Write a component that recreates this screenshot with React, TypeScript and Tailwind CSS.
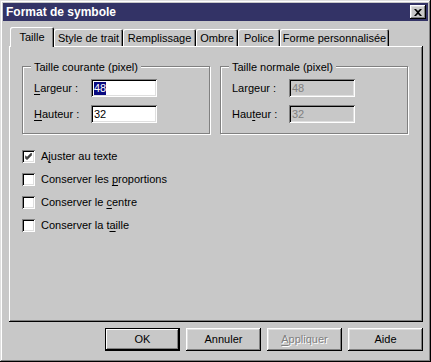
import React from "react";

const raised =
  "shadow-[inset_-1px_-1px_0_#000,inset_1px_1px_0_#fff,inset_-2px_-2px_0_#808080,inset_2px_2px_0_#dfdfdf]";
const sunken =
  "shadow-[inset_1px_1px_0_#808080,inset_-1px_-1px_0_#fff,inset_2px_2px_0_#000,inset_-2px_-2px_0_#dfdfdf]";

function U({ children }: { children: React.ReactNode }) {
  return <span className="underline underline-offset-[2px]">{children}</span>;
}

function Tab({ label, w, active }: { label: string; w: string; active?: boolean }) {
  if (active) {
    return (
      <div
        className={`${w} h-[20px] -mb-[1px] relative z-10 bg-[#c8c8c8] rounded-t-[2px] flex items-center justify-center pt-[1px] whitespace-nowrap shadow-[inset_1px_1px_0_#fff,inset_-1px_0_0_#000,inset_-2px_0_0_#808080]`}
      >
        {label}
      </div>
    );
  }
  return (
    <div
      className={`${w} h-[17px] rounded-t-[2px] flex items-center justify-center pt-[1px] whitespace-nowrap shadow-[inset_1px_1px_0_#fff,inset_-1px_0_0_#000,inset_-2px_0_0_#808080]`}
    >
      {label}
    </div>
  );
}

function Field({
  label,
  value,
  disabled,
  selected,
}: {
  label: React.ReactNode;
  value: string;
  disabled?: boolean;
  selected?: boolean;
}) {
  return (
    <div className="flex items-center h-[18px]">
      <div className={`w-[68px] pl-[11px] whitespace-nowrap ${disabled ? "" : ""}`}>{label}</div>
      <div
        className={`${sunken} w-[66px] h-[18px] flex items-center pl-[3px] ${
          disabled ? "bg-[#c8c8c8] text-[#808080]" : "bg-white text-black"
        }`}
      >
        {selected ? (
          <span className="bg-[#0a0a80] text-white leading-[13px]">{value}</span>
        ) : (
          <span>{value}</span>
        )}
      </div>
    </div>
  );
}

function Group({ title, children }: { title: string; children: React.ReactNode }) {
  return (
    <div className="relative w-[188px] h-[68px] border border-[#808080] shadow-[1px_1px_0_#fff,inset_1px_1px_0_#fff]">
      <div className="absolute -top-[8px] left-[8px] bg-[#c8c8c8] px-[3px] whitespace-nowrap">{title}</div>
      <div className="flex flex-col gap-[8px] pt-[12px]">{children}</div>
    </div>
  );
}

function Check({ label, checked }: { label: React.ReactNode; checked?: boolean }) {
  return (
    <div className="flex items-center h-[13px] gap-[6px]">
      <div className={`${sunken} w-[13px] h-[13px] bg-white flex items-center justify-center`}>
        {checked && (
          <svg width="7" height="7" viewBox="0 0 7 7">
            <path d="M0 2.5 L2 4.5 L7 -0.5 M0 3.5 L2 5.5 L7 0.5 M0 4.5 L2 6.5 L7 1.5" stroke="#000" strokeWidth="1" fill="none" />
          </svg>
        )}
      </div>
      <span className="whitespace-nowrap">{label}</span>
    </div>
  );
}

function Button({
  children,
  isDefault,
  disabled,
}: {
  children: React.ReactNode;
  isDefault?: boolean;
  disabled?: boolean;
}) {
  return (
    <div
      className={`w-[75px] h-[23px] flex items-center justify-center whitespace-nowrap ${
        isDefault
          ? "shadow-[inset_0_0_0_1px_#000,inset_-2px_-2px_0_#000,inset_2px_2px_0_#fff,inset_-3px_-3px_0_#808080]"
          : raised
      } ${disabled ? "text-[#808080] [text-shadow:1px_1px_0_#fff]" : "text-black"}`}
    >
      {children}
    </div>
  );
}

export default function App() {
  return (
    <div className="w-[431px] h-[362px] bg-[#c8c8c8] font-['Liberation_Sans',Arial,sans-serif] text-[11px] text-black shadow-[inset_-1px_-1px_0_#000,inset_1px_1px_0_#dfdfdf,inset_-2px_-2px_0_#808080,inset_2px_2px_0_#fff] p-[3px] flex flex-col">
      {/* Title bar */}
      <div className="h-[18px] bg-[#333366] flex items-center justify-between pl-[3px] pr-[2px]">
        <span className="text-white font-bold text-[12px] leading-none">Format de symbole</span>
        <div className={`${raised} bg-[#c8c8c8] w-[16px] h-[14px] flex items-center justify-center`}>
          <svg width="8" height="7" viewBox="0 0 8 7">
            <path d="M0 0h2l2 2 2-2h2L5 3.5 8 7H6L4 5 2 7H0l3-3.5z" fill="#000" />
          </svg>
        </div>
      </div>

      {/* Tabs */}
      <div className="mt-[6px] pl-[6px] flex flex-col">
        <div className="flex items-end pl-[1px]">
          <Tab label="Taille" w="w-[44px]" active />
          <Tab label="Style de trait" w="w-[69px]" />
          <Tab label="Remplissage" w="w-[73px]" />
          <Tab label="Ombre" w="w-[42px]" />
          <Tab label="Police" w="w-[42px]" />
          <Tab label="Forme personnalisée" w="w-[109px]" />
        </div>
        <div className="w-[414px] h-[276px] shadow-[inset_-1px_-1px_0_#000,inset_1px_1px_0_#fff,inset_-2px_-2px_0_#808080] pl-[13px] pt-[20px]">
          <div className="flex gap-[10px]">
            <Group title="Taille courante (pixel)">
              <Field label={<><U>L</U>argeur :</>} value="48" selected />
              <Field label={<><U>H</U>auteur :</>} value="32" />
            </Group>
            <Group title="Taille normale (pixel)">
              <Field label="Largeur :" value="48" disabled />
              <Field label={<>Hau<U>t</U>eur :</>} value="32" disabled />
            </Group>
          </div>
          <div className="flex flex-col gap-[10px] mt-[16px]">
            <Check checked label={<>A<U>j</U>uster au texte</>} />
            <Check label={<>Conserver les <U>p</U>roportions</>} />
            <Check label={<>Conserver le <U>c</U>entre</>} />
            <Check label={<>Conserver la t<U>a</U>ille</>} />
          </div>
        </div>
      </div>

      {/* Buttons */}
      <div className="flex justify-end gap-[6px] mt-[6px] pr-[5px]">
        <Button isDefault>OK</Button>
        <Button>Annuler</Button>
        <Button disabled>
          <U>A</U>ppliquer
        </Button>
        <Button>Aide</Button>
      </div>
    </div>
  );
}
